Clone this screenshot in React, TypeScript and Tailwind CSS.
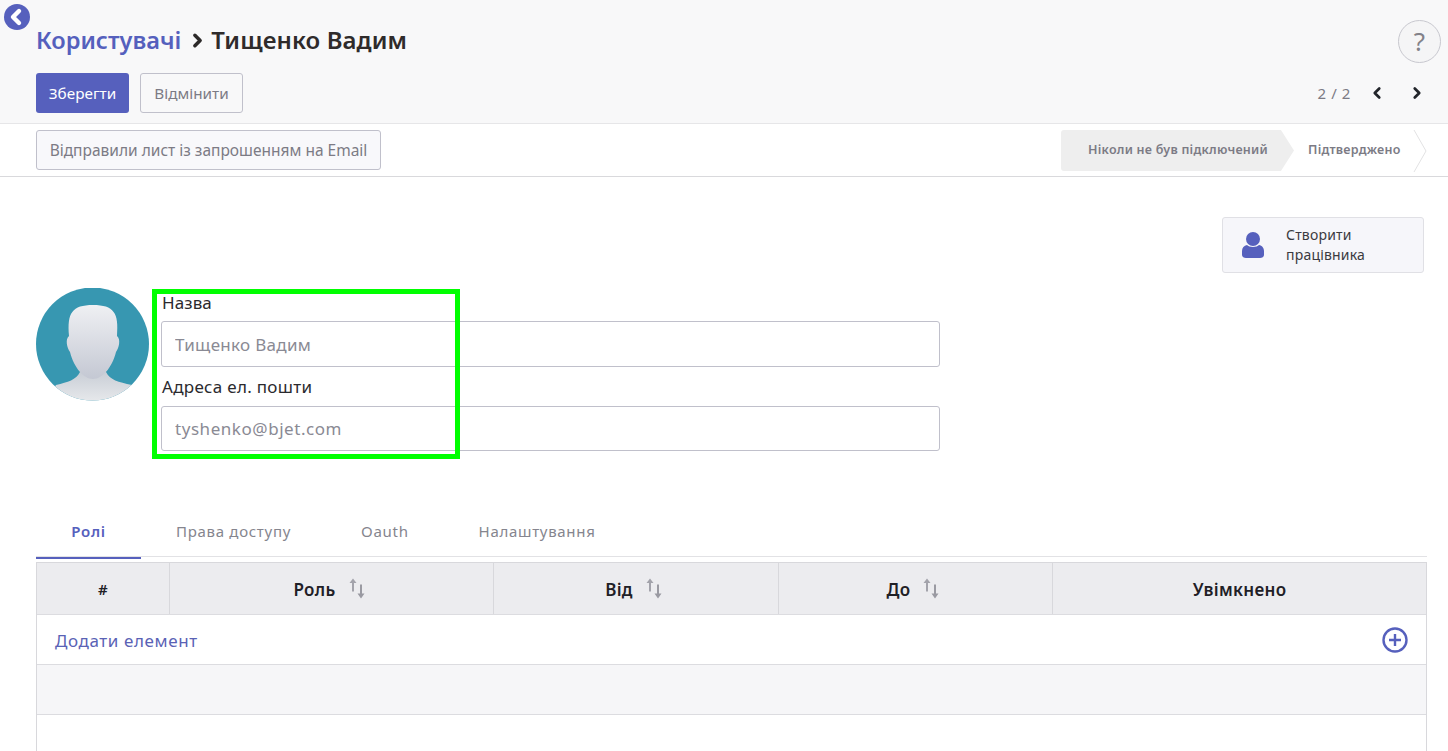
import React from 'react';
import { ChevronLeft, ChevronRight } from 'lucide-react';

const SortIcon = () => (
  <svg width="16" height="21" viewBox="0 0 16 21" className="text-[#a3a3ab]" fill="currentColor">
    <path d="M4 0.5 L7.5 5 H5 V13.5 H3 V5 H0.5 Z" />
    <path d="M11 6.5 H13 V15.5 H15.5 L12 20.5 L8.5 15.5 H11 Z" fill="#9a9aa2" />
  </svg>
);

const Avatar = () => (
  <svg width="113" height="113" viewBox="0 0 113 113" className="shrink-0">
    <defs>
      <clipPath id="avatar-clip">
        <circle cx="56.5" cy="56" r="56.5" />
      </clipPath>
      <linearGradient id="face" x1="0" y1="0" x2="0" y2="1">
        <stop offset="0" stopColor="#eff0f3" />
        <stop offset="1" stopColor="#c4c8d3" />
      </linearGradient>
      <linearGradient id="body" x1="0" y1="0" x2="0" y2="1">
        <stop offset="0" stopColor="#c9ced6" />
        <stop offset="1" stopColor="#e6e8eb" />
      </linearGradient>
    </defs>
    <g clipPath="url(#avatar-clip)">
      <rect width="113" height="113" fill="#3797b1" />
      <path d="M20 97 C32 94 40 92 44 84 L70 84 C74 92 82 94 96 97 L104 113 H10 Z" fill="url(#body)" />
      <path d="M33 48 C31 25 36 17 57 17 C78 17 83 25 81 48 C85 51 83 60 80 64 C76 80 66 91 57 91 C48 91 38 80 34 64 C31 60 29 51 33 48 Z" fill="url(#face)" />
    </g>
  </svg>
);

const cols = 'grid grid-cols-[133px_324px_285px_274px_1fr]';

export default function App() {
  return (
    <div className="relative h-[751px] w-[1448px] overflow-hidden bg-white font-['Noto_Sans',sans-serif] text-[#212529]">
      {/* Header */}
      <div className="relative h-[124px] border-b border-[#e6e6e8] bg-[#f8f8f9] pl-9 pr-[22px] pt-[22px]">
        <div className="flex h-[36px] items-center text-[24px] font-semibold leading-[36px]">
          <span className="text-[23.6px] text-[#5560bd]">Користувачі</span>
          <ChevronRight size={21} strokeWidth={4} className="ml-[6px] mr-[3px] text-[#2d2a2a]" />
          <span className="tracking-[0.1px] text-[#2f2b2b]">Тищенко Вадим</span>
        </div>
        <div className="mt-[15px] flex items-center gap-[11px] text-[15.3px]">
          <button className="h-[40px] w-[93px] rounded-[3px] bg-[#5660bd] pt-px text-white">Зберегти</button>
          <button className="h-[40px] w-[103px] rounded-[3px] border border-[#c0c0cb] pt-px text-[#7c7b85]">Відмінити</button>
          <div className="ml-auto flex items-center text-[#7c7b85]">
            <span className="mr-[17px] text-[15px] tracking-[0.6px]">2 / 2</span>
            <ChevronLeft size={18} strokeWidth={3.6} className="mr-[22px] text-[#22252b]" />
            <ChevronRight size={18} strokeWidth={3.6} className="text-[#22252b]" />
          </div>
        </div>
        <div className="absolute right-[7px] top-[20px] flex h-[43px] w-[43px] items-center justify-center rounded-full border border-[#c8c8cf] bg-[#f5f5f6] text-[26px] text-[#828188]">?</div>
      </div>

      {/* Back button */}
      <div className="absolute left-[4px] top-[4px] flex h-[26px] w-[26px] items-center justify-center rounded-full bg-[#5660bd]">
        <ChevronLeft size={24} strokeWidth={4.4} className="mr-[2px] text-white" />
      </div>

      {/* Status bar */}
      <div className="flex h-[53px] items-center justify-between border-b border-[#d9d9dc] pl-9 pr-[21px]">
        <button className="h-[40px] w-[345px] rounded-[3px] border border-[#c0c0cb] bg-[#f8f8fb] pt-[2px] text-[15.5px] text-[#7c7b85]">
          Відправили лист із запрошенням на Email
        </button>
        <div className="flex h-[42px] items-stretch pt-px text-[12.5px] font-semibold tracking-[0.25px] text-[#7c7b85]">
          <div className="flex w-[233px] items-center rounded-l-[3px] bg-[#eeeeee] pl-[27px] [clip-path:polygon(0_0,94.4%_0,100%_50%,94.4%_100%,0_100%)]">
            Ніколи не був підключений
          </div>
          <div className="relative flex w-[133px] items-center pl-[14px]">
            Підтверджено
            <svg width="14" height="42" viewBox="0 0 14 42" className="absolute right-0 top-0" fill="none" stroke="#e2e2e4">
              <path d="M1 0 L13 21 L1 42" />
            </svg>
          </div>
        </div>
      </div>

      {/* Form */}
      <div className="pl-9 pr-[21px]">
        <div className="flex justify-end pr-[3px] pt-[40px]">
          <div className="flex h-[56px] w-[202px] items-center rounded-[3px] border border-[#e0e0e5] bg-[#f6f6fa] text-[14px] leading-[20px] tracking-[0.2px] text-[#3b3a40]">
            <svg width="22" height="26" viewBox="0 0 22 26" className="ml-[19px] mr-[22px] shrink-0" fill="#5660bd">
              <circle cx="11" cy="7" r="7" />
              <path d="M5 13 C7 15.5 15 15.5 17 13 C20 13.500 22 16 22 19 V23 C22 25 20 26 18 26 H4 C2 26 0 25 0 23 V19 C0 16 2 13.500 5 13 Z" />
            </svg>
            <span className="w-[90px]">Створити працівника</span>
          </div>
        </div>

        <div className="mt-[15px] flex">
          <Avatar />
          <div className="ml-[12px] w-[779px] text-[17px] tracking-[0.3px]">
            <label className="block h-[33px] pl-px leading-[30px] tracking-[0.1px] text-[#2b2a2e]">Назва</label>
            <input readOnly value="Тищенко Вадим" className="block h-[46px] w-full rounded-[3px] border border-[#c0c0cb] px-[13px] text-[#8a8a94] outline-none" />
            <label className="block h-[39px] pl-px pt-[5px] leading-[30px] text-[#2b2a2e]">Адреса ел. пошти</label>
            <input readOnly value="tyshenko@bjet.com" className="block h-[45px] w-full rounded-[3px] border border-[#c0c0cb] px-[13px] tracking-[0.55px] text-[#8a8a94] outline-none" />
          </div>
        </div>

        {/* Tabs */}
        <div className="mt-[57px] flex h-[49px] border-b border-[#e2e2e5] text-[15px] tracking-[0.7px] text-[#85858e]">
          <div className="relative mb-[-3px] flex h-[51px] w-[105px] items-start justify-center border-b-2 border-[#5660bd] pt-[12px] font-semibold text-[#5660bd]">Ролі</div>
          <div className="ml-[35px] pt-[12px]">Права доступу</div>
          <div className="ml-[70px] pt-[12px]">Oauth</div>
          <div className="ml-[70px] pt-[12px]">Налаштування</div>
        </div>

        {/* Table */}
        <div className="mt-[5px] h-[220px] border-x border-t border-[#d8d8dc]">
          <div className={`${cols} h-[52px] border-b border-[#dcdce0] bg-[#ececef] text-[17px] font-semibold tracking-[0.3px] text-[#1f2026]`}>
            <div className="flex items-center justify-center border-r border-[#d8d8dc] pt-[2px] text-[15px]">#</div>
            <div className="flex items-center justify-center gap-[13px] border-r border-[#d8d8dc] pr-[5px]"><span className="pt-[3px]">Роль</span> <SortIcon /></div>
            <div className="flex items-center justify-center gap-[13px] border-r border-[#d8d8dc] pr-[5px]"><span className="pt-[3px]">Від</span> <SortIcon /></div>
            <div className="flex items-center justify-center gap-[13px] border-r border-[#d8d8dc] pr-[5px]"><span className="pt-[3px]">До</span> <SortIcon /></div>
            <div className="flex items-center justify-center pt-[3px]">Увімкнено</div>
          </div>
          <div className="flex h-[50px] items-center justify-between border-b border-[#dcdce0] pl-[18px] pr-[18px] text-[17px] text-[#5a62b5]">
            <span className="pt-[3px] tracking-[0.6px]">Додати елемент</span>
            <svg width="26" height="26" viewBox="0 0 26 26" fill="none" stroke="#5660bd" strokeWidth="2.4">
              <circle cx="13" cy="13" r="11.500" />
              <path d="M13 7 V19 M7 13 H19" />
            </svg>
          </div>
          <div className="h-[50px] border-b border-[#dcdce0] bg-[#f6f6f8]" />
        </div>
      </div>

      {/* Annotation box */}
      <div className="pointer-events-none absolute left-[152px] top-[289px] h-[170px] w-[308px] border-[5px] border-[#00ff00]" />
    </div>
  );
}
